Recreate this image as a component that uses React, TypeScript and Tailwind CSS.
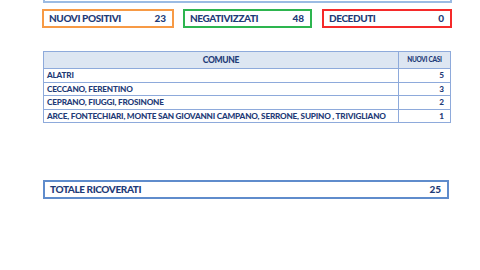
const rows = [
  { comune: 'ALATRI', casi: 5 },
  { comune: 'CECCANO, FERENTINO', casi: 3 },
  { comune: 'CEPRANO, FIUGGI, FROSINONE', casi: 2 },
  { comune: 'ARCE, FONTECHIARI, MONTE SAN GIOVANNI CAMPANO, SERRONE, SUPINO , TRIVIGLIANO', casi: 1 },
];

function StatBox({ label, value, border, width }: { label: string; value: number; border: string; width: string }) {
  return (
    <div className={`flex h-[19px] items-center justify-between border-2 pl-[5px] pr-[6px] ${border} ${width}`}>
      <span className="text-[10px] font-black tracking-[-0.4px]">{label}</span>
      <span className="text-[10px] font-black">{value}</span>
    </div>
  );
}

export default function App() {
  return (
    <div
      className="relative h-[270px] w-[480px] overflow-hidden bg-white text-[#1f3c78]"
      style={{ fontFamily: 'Lato, "Liberation Sans", sans-serif' }}
    >
      {/* barra superiore tagliata */}
      <div className="ml-[43px] h-[3px] w-[409px] border-x-2 border-b-2 border-[#9bbbe3]" />

      {/* riquadri */}
      <div className="ml-[42px] mt-[6px] flex">
        <StatBox label="NUOVI POSITIVI" value={23} border="border-[#f79a45]" width="w-[132px]" />
        <div className="w-[9px]" />
        <StatBox label="NEGATIVIZZATI" value={48} border="border-[#2db54f]" width="w-[129px]" />
        <div className="w-[10px]" />
        <StatBox label="DECEDUTI" value={0} border="border-[#f52a2a]" width="w-[130px]" />
      </div>

      {/* tabella comuni */}
      <table className="ml-[43px] mt-[23px] w-[408px] border-collapse text-[8.2px] font-black">
        <thead>
          <tr className="h-[17px] bg-[#dde6f2]">
            <th className="border border-[#8eaadb] text-center text-[8.5px] font-black tracking-[-0.3px]">COMUNE</th>
            <th className="w-[52px] border border-[#8eaadb] text-center text-[6.5px] font-black tracking-[-0.3px]">NUOVI CASI</th>
          </tr>
        </thead>
        <tbody>
          {rows.map((r) => (
            <tr key={r.comune} className="h-[13.5px]">
              <td className="border border-[#8eaadb] pl-[3px] leading-none tracking-[-0.2px]">{r.comune}</td>
              <td className="border border-[#8eaadb] pr-[6px] text-right leading-none">{r.casi}</td>
            </tr>
          ))}
        </tbody>
      </table>

      {/* totale ricoverati */}
      <div className="ml-[43px] mt-[57px] flex h-[19px] w-[406px] items-center justify-between border-2 border-[#5f8ccc] pl-[5px] pr-[6px]">
        <span className="text-[10px] font-black tracking-[-0.4px]">TOTALE RICOVERATI</span>
        <span className="text-[10px] font-black">25</span>
      </div>
    </div>
  );
}
